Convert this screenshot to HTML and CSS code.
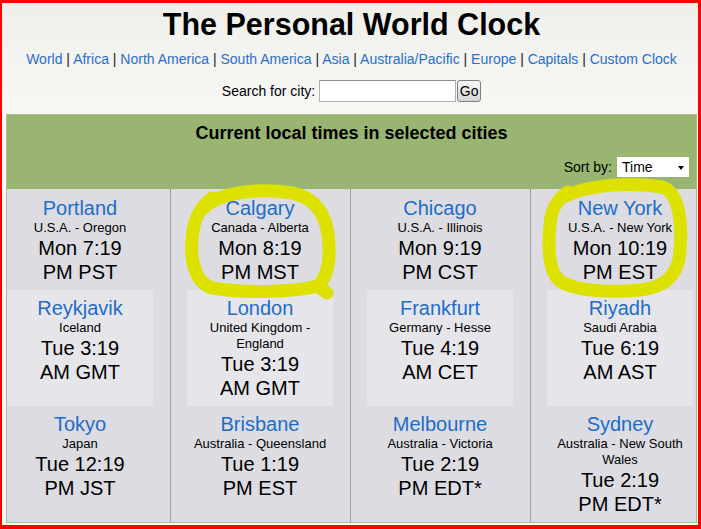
FILE: index.html
```html
<!DOCTYPE html>
<html lang="en">
  <head>
    <meta charset="UTF-8" />
    <meta name="viewport" content="width=device-width, initial-scale=1.0" />
    <title>The Personal World Clock</title>
    <link rel="stylesheet" href="styles.css">
  </head>
  <body>
    <div class="page">
      <h1>The Personal World Clock</h1>

      <div class="nav">
        <a href="#">World</a> | <a href="#">Africa</a> | <a href="#">North America</a> |
        <a href="#">South America</a> | <a href="#">Asia</a> | <a href="#">Australia/Pacific</a> |
        <a href="#">Europe</a> | <a href="#">Capitals</a> | <a href="#">Custom Clock</a>
      </div>

      <form class="search">
        <label for="city">Search for city:</label>
        <input type="text" id="city" name="city" />
        <button type="submit">Go</button>
      </form>

      <div class="clock-table">
        <div class="clock-head">
          <h2>Current local times in selected cities</h2>
          <div class="sort">
            <span>Sort by:</span>
            <div class="select">Time<span class="caret"></span></div>
          </div>
        </div>

        <div class="clock-grid">
          <!-- row 1 -->
          <div class="cell first top">
            <div class="city">
              <a class="name" href="#">Portland</a>
              <div class="place">U.S.A. - Oregon</div>
              <div class="time">Mon 7:19<br>PM PST</div>
            </div>
          </div>
          <div class="cell top">
            <div class="city">
              <a class="name" href="#">Calgary</a>
              <div class="place">Canada - Alberta</div>
              <div class="time">Mon 8:19<br>PM MST</div>
            </div>
          </div>
          <div class="cell top">
            <div class="city">
              <a class="name" href="#">Chicago</a>
              <div class="place">U.S.A. - Illinois</div>
              <div class="time">Mon 9:19<br>PM CST</div>
            </div>
          </div>
          <div class="cell top">
            <div class="city">
              <a class="name" href="#">New York</a>
              <div class="place">U.S.A. - New York</div>
              <div class="time">Mon 10:19<br>PM EST</div>
            </div>
          </div>

          <!-- row 2 -->
          <div class="cell first alt">
            <div class="city">
              <a class="name" href="#">Reykjavik</a>
              <div class="place">Iceland</div>
              <div class="time">Tue 3:19<br>AM GMT</div>
            </div>
          </div>
          <div class="cell alt">
            <div class="city">
              <a class="name" href="#">London</a>
              <div class="place">United Kingdom - England</div>
              <div class="time">Tue 3:19<br>AM GMT</div>
            </div>
          </div>
          <div class="cell alt">
            <div class="city">
              <a class="name" href="#">Frankfurt</a>
              <div class="place">Germany - Hesse</div>
              <div class="time">Tue 4:19<br>AM CET</div>
            </div>
          </div>
          <div class="cell alt">
            <div class="city">
              <a class="name" href="#">Riyadh</a>
              <div class="place">Saudi Arabia</div>
              <div class="time">Tue 6:19<br>AM AST</div>
            </div>
          </div>

          <!-- row 3 -->
          <div class="cell first">
            <div class="city">
              <a class="name" href="#">Tokyo</a>
              <div class="place">Japan</div>
              <div class="time">Tue 12:19<br>PM JST</div>
            </div>
          </div>
          <div class="cell">
            <div class="city">
              <a class="name" href="#">Brisbane</a>
              <div class="place">Australia - Queensland</div>
              <div class="time">Tue 1:19<br>PM EST</div>
            </div>
          </div>
          <div class="cell">
            <div class="city">
              <a class="name" href="#">Melbourne</a>
              <div class="place">Australia - Victoria</div>
              <div class="time">Tue 2:19<br>PM EDT*</div>
            </div>
          </div>
          <div class="cell">
            <div class="city">
              <a class="name" href="#">Sydney</a>
              <div class="place">Australia - New South Wales</div>
              <div class="time">Tue 2:19<br>PM EDT*</div>
            </div>
          </div>
        </div>
      </div>
    </div>

    <!-- highlighter marks, drawn between the cell backgrounds and the text -->
    <svg class="marks" width="701" height="529" viewBox="0 0 701 529">
      <g fill="none" stroke="#dce100" stroke-width="13" stroke-linecap="round" stroke-linejoin="round">
        <path d="M204 208 C220 191 262 188 292 193 C318 198 328 218 329 245 C330 265 326 278 318 286 C290 293 240 293 212 288 C196 283 190 262 192 240 C193 222 198 208 212 198" />
        <path d="M318 286 L327 293" />
        <path d="M566 196 C590 184 635 182 662 187 C680 192 682 225 680 250 C679 272 668 287 640 290 C610 293 575 291 560 281 C548 271 548 245 550 225 C551 210 556 200 568 192" />
      </g>
    </svg>
  </body>
</html>
```

FILE: styles.css
```css
* {
  box-sizing: border-box;
}
body {
  margin: 0;
  font-family: "Liberation Sans", Arial, sans-serif;
  color: #000;
}
.page {
  position: relative;
  width: 701px;
  height: 529px;
  border: solid #ff0000;
  border-width: 3px 3px 4px 2px;
  padding: 0 1px 2px 4px;
  background: linear-gradient(#efefea, #f8f8f6 120px);
}
h1 {
  margin: 2px 0 0;
  font-size: 30.5px;
  line-height: 38px;
  text-align: center;
}
.nav {
  margin-top: 7px;
  font-size: 14px;
  line-height: 18px;
  text-align: center;
  color: #222;
}
.nav a {
  color: #2a6fc9;
  text-decoration: none;
}
.search {
  margin: 12px 0 0;
  display: flex;
  justify-content: center;
  align-items: center;
  height: 22px;
  font-size: 14px;
}
.search label {
  margin-right: 4px;
}
.search input {
  width: 137px;
  height: 22px;
  padding: 0 3px;
  border: 1px solid #b0b0b0;
  border-top-color: #8c8c8c;
  background: #fff;
}
.search button {
  width: 24px;
  height: 22px;
  margin-left: 1px;
  padding: 0;
  font-family: inherit;
  font-size: 14px;
  border: 1px solid #808080;
  border-radius: 3px;
  background: linear-gradient(#f6f6f6, #d6d6d6);
}
.clock-table {
  margin-top: 12px;
  border: 1px solid #a9c08c;
}
.clock-head {
  background: #9ab572;
  padding: 7px 7px 12px;
}
.clock-head h2 {
  margin: 0;
  font-size: 18px;
  line-height: 22px;
  text-align: center;
}
.sort {
  margin-top: 13px;
  height: 20px;
  display: flex;
  justify-content: flex-end;
  align-items: center;
  gap: 5px;
  font-size: 14px;
}
.select {
  position: relative;
  width: 72px;
  height: 20px;
  padding-left: 5px;
  line-height: 20px;
  background: #fff;
}
.caret {
  position: absolute;
  right: 5px;
  top: 9px;
  border-left: 3.5px solid transparent;
  border-right: 3.5px solid transparent;
  border-top: 4px solid #000;
}
.clock-grid {
  display: grid;
  grid-template-columns: 163px 180px 180px 166px;
  grid-template-rows: 101px 116px 116px;
  background: #dcdce2;
}
.cell {
  display: flex;
  padding-left: 16px;
  border-left: 1px solid #9c9ca2;
}
.cell.first {
  padding-left: 0;
  border-left: 0;
}
.city {
  width: 146px;
  padding-top: 6px;
  text-align: center;
}
.city > * {
  position: relative;
  z-index: 2;
}
.cell.top .city {
  padding-top: 7px;
}
.cell.alt .city {
  background: #e6e6ea;
}
.name {
  display: block;
  font-size: 20px;
  line-height: 24px;
  color: #1f6cc6;
  text-decoration: none;
}
.place {
  font-size: 13px;
  line-height: 16px;
}
.time {
  font-size: 20px;
  line-height: 24px;
}
.marks {
  position: absolute;
  top: 0;
  left: 0;
  z-index: 1;
  pointer-events: none;
}
```
